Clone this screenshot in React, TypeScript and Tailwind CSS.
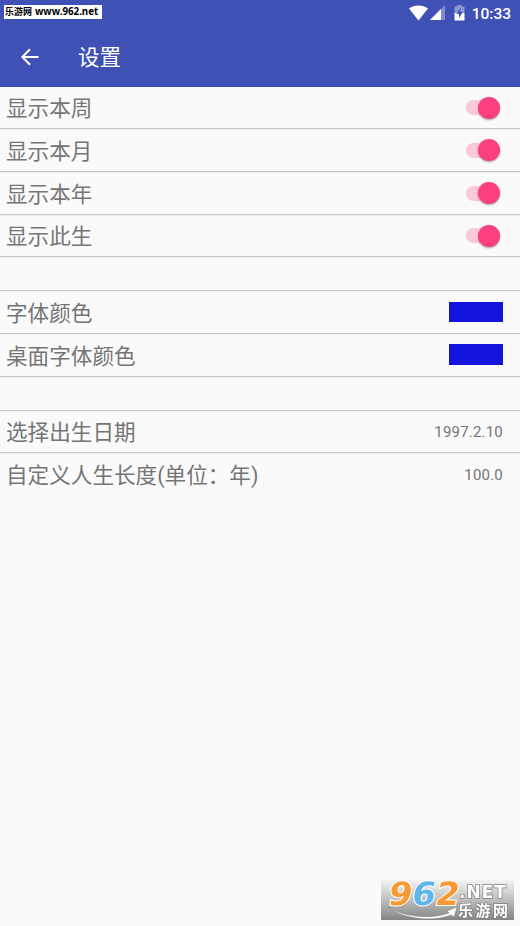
import { useState } from 'react';

const TOGGLES = [
  { label: '显示本周', h: 'h-[42px]' },
  { label: '显示本月', h: 'h-[43px]' },
  { label: '显示本年', h: 'h-[43px]' },
  { label: '显示此生', h: 'h-[42px]' },
];

const COLORS = [
  { label: '字体颜色', color: '#1414dc', swatch: 'h-5' },
  { label: '桌面字体颜色', color: '#1414dc', swatch: 'mb-px h-[21px]' },
];

const VALUES = [
  { label: '选择出生日期', value: '1997.2.10', h: 'h-[42px] border-b shadow-[0_1px_0_#ececec]' },
  { label: '自定义人生长度(单位：年)', value: '100.0', h: 'h-[43px]' },
];

function Label({ children }: { children: string }) {
  return <span className="pt-[3px] text-[21.6px] leading-none text-[#757575]">{children}</span>;
}

function Spacer() {
  return <div className="h-[34px] border-b border-[#c8c8c8] shadow-[0_1px_0_#ececec]" />;
}

function Switch({ on, onToggle }: { on: boolean; onToggle: () => void }) {
  return (
    <button
      type="button"
      role="switch"
      aria-checked={on}
      onClick={onToggle}
      className={`flex h-[15px] w-[34px] items-center rounded-full ${
        on ? 'justify-end bg-[#fcc8da]' : 'justify-start bg-[#b9b9b9]'
      }`}
    >
      <span
        className={`size-[22px] shrink-0 rounded-full shadow-[0_1px_2px_rgba(0,0,0,0.35)] ${
          on ? 'bg-[#fc3f80]' : 'bg-[#f1f1f1]'
        }`}
      />
    </button>
  );
}

function StatusBar() {
  return (
    <div className="flex h-[26px] items-start justify-between">
      <div className="ml-1 mt-[5px] flex h-[14px] w-[98px] items-center bg-white pl-px text-black">
        <span className="whitespace-nowrap text-[9px] font-bold leading-none">乐游网</span>
        <span className="ml-[3px] whitespace-nowrap font-['Noto_Sans'] text-[9.75px] font-bold leading-none">
          www.962.net
        </span>
      </div>
      <div className="flex items-start pr-[9px] pt-[5px] text-white">
        <svg width="56" height="17" viewBox="0 0 56 17" fill="currentColor">
          <path d="M0 3.6C5.5-.6 13.5-.6 19 3.6L9.5 15.5Z" />
          <path d="M36 0V15H21Z" opacity=".35" />
          <path d="M32 4V15H21L32 4Z" />
          <path d="M45.5 1.5h2.8V0h4.4v1.5h2.8V8h-10Z" opacity=".4" />
          <path d="M45.5 8h10v7.5h-10Z" />
          <path d="M51.5 3l-4 6h2.5v4l4-6H51.5Z" fill="#3f51b5" />
        </svg>
        <span className="ml-[7px] mt-px text-[15.5px] font-medium leading-[17px]">10:33</span>
      </div>
    </div>
  );
}

function Watermark() {
  return (
    <svg className="fixed left-[381px] top-[880px] overflow-visible" width="133" height="40" viewBox="0 0 133 40">
      <defs>
        <linearGradient id="plate" x1="0" y1="0" x2="0" y2="1">
          <stop offset="0" stopColor="#f4f4f4" />
          <stop offset="0.5" stopColor="#bdbdbd" />
          <stop offset="1" stopColor="#858585" />
        </linearGradient>
      </defs>
      <rect width="133" height="40" fill="url(#plate)" />
      <text
        transform="translate(6 24.5) skewX(-10) scale(1.06 1)"
        fontFamily="'DejaVu Sans', sans-serif"
        fontSize="32"
        fontWeight="bold"
        stroke="#fff"
        strokeWidth="2"
        paintOrder="stroke"
      >
        <tspan fill="#f79a33">9</tspan>
        <tspan fill="#60b6e8">6</tspan>
        <tspan fill="#f79a33">2</tspan>
      </text>
      <path
        d="M7 27C24 38 52 39 68 33L66 31L76 27L73 37L70 35C49 43 20 38 7 27Z"
        fill="#fff"
        stroke="#888"
        strokeWidth=".6"
      />
      <g fill="#fff" stroke="#808080" strokeWidth="1.4" paintOrder="stroke" fontWeight="bold">
        <text
          x="78"
          y="17.5"
          fontFamily="'DejaVu Sans', sans-serif"
          fontSize="17"
          letterSpacing="1"
        >
          .NET
        </text>
        <text x="77" y="35.5" fontFamily="'Noto Sans CJK SC', sans-serif" fontSize="15" letterSpacing="2.5">
          乐游网
        </text>
      </g>
    </svg>
  );
}

export default function App() {
  const [toggles, setToggles] = useState([true, true, true, true]);

  const flip = (index: number) => setToggles((prev) => prev.map((v, i) => (i === index ? !v : v)));

  return (
    <div className="min-h-screen bg-[#fafafa] font-[Roboto,'Noto_Sans_CJK_SC',sans-serif]">
      <header className="h-[87px] bg-[#3f51b5]">
        <StatusBar />
        <div className="flex h-[61px] items-center pl-[21px] text-white">
          <svg width="18" height="18" viewBox="0 0 18 18" fill="none" stroke="currentColor" strokeWidth="2">
            <path d="M17.5 9H1.5M9 1.2L1.3 9L9 16.8" />
          </svg>
          <h1 className="ml-[39px] pt-[2px] text-[21.5px] leading-none">设置</h1>
        </div>
      </header>

      <main>
        {TOGGLES.map(({ label, h }, i) => (
          <div
            key={label}
            className={`flex items-center justify-between border-b border-[#c8c8c8] pl-[6px] pr-5 shadow-[0_1px_0_#ececec] ${h}`}
          >
            <Label>{label}</Label>
            <Switch on={toggles[i]} onToggle={() => flip(i)} />
          </div>
        ))}

        <Spacer />

        {COLORS.map(({ label, color, swatch }) => (
          <div
            key={label}
            className="flex h-[43px] items-center justify-between border-b border-[#c8c8c8] pl-[6px] pr-[17px] shadow-[0_1px_0_#ececec]"
          >
            <Label>{label}</Label>
            <span className={`w-[54px] ${swatch}`} style={{ backgroundColor: color }} />
          </div>
        ))}

        <Spacer />

        {VALUES.map(({ label, value, h }) => (
          <div key={label} className={`flex items-center justify-between border-[#c8c8c8] pl-[6px] pr-[17px] ${h}`}>
            <Label>{label}</Label>
            <span className="pt-[2px] text-[15px] leading-none tracking-[0.2px] text-[#757575]">{value}</span>
          </div>
        ))}
      </main>

      <Watermark />
    </div>
  );
}
